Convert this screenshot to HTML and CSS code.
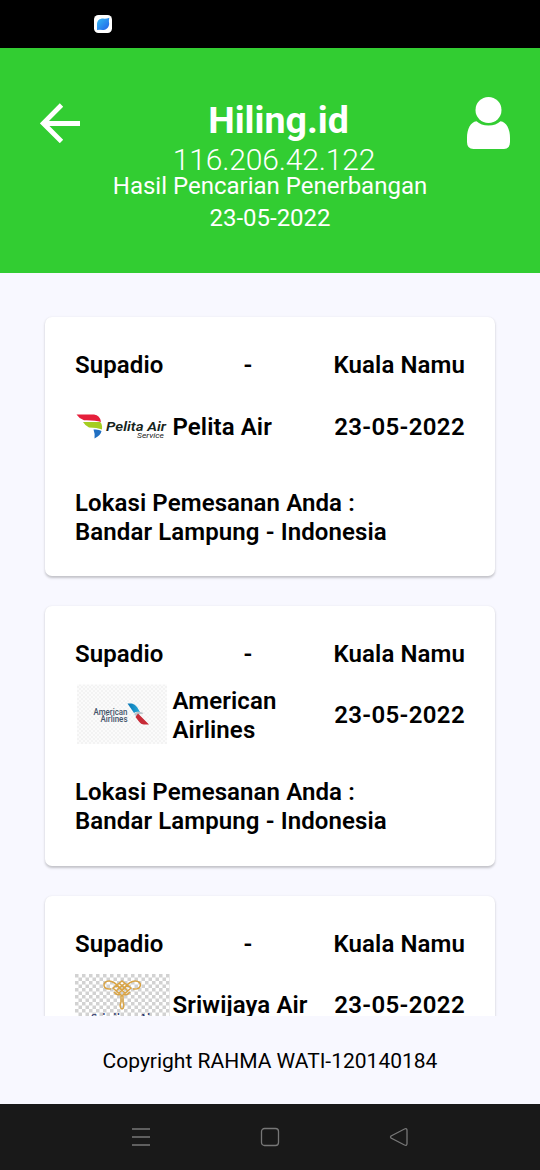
FILE: index.html
```html
<!DOCTYPE html>
<html lang="id">
<head>
<meta charset="utf-8">
<title>Hiling.id</title>
<link rel="stylesheet" href="styles.css">
</head>
<body>
<div class="status">
  <svg class="status-icon" width="18" height="18" viewBox="0 0 18 18">
    <defs><linearGradient id="leaf" x1="0" y1="0" x2="1" y2="1"><stop offset="0" stop-color="#35bdf5"/><stop offset="1" stop-color="#2460e8"/></linearGradient></defs>
    <rect width="18" height="18" rx="4.5" fill="#fff"/>
    <path d="M3 15V9.500C3 5.500 5.500 3.500 9 3.500Q12 4 15.300 2.700Q14.500 6 15.200 9C14.600 13 12 15 8.500 15Q6 14.300 3 15Z" fill="url(#leaf)"/>
  </svg>
</div>
<header class="header">
  <svg class="back" width="40" height="40" viewBox="0 0 40 40" fill="none" stroke="#fff" stroke-width="4.800"><path d="M40 20.500H3M21.500 2L3.300 20.300L21.500 38.500"/></svg>
  <div class="heading">
    <h1 class="title">Hiling.id</h1>
    <div class="ip">116.206.42.122</div>
    <div class="subtitle">Hasil Pencarian Penerbangan</div>
    <div class="date">23-05-2022</div>
  </div>
  <svg class="user" width="44" height="52" viewBox="0 0 44 52" fill="#fff"><circle cx="22.500" cy="13" r="13"/><path d="M10.500 24.200C13.500 27 17.500 28.600 22.500 28.600S31.500 27 34.500 24.200C40.500 25 44 32 44 41V45Q44 52 38 52H7.500Q1 52 1 45V41C1 32 4.500 25 10.500 24.200Z"/></svg>
</header>
<main class="list">
  <section class="card">
    <div class="route"><span class="from">Supadio</span><span>-</span><span class="to">Kuala Namu</span></div>
    <div class="flight">
      <svg class="logo" width="95" height="60" viewBox="0 0 95 60">
        <path d="M1.500 17.500H19Q25 18 26 25Q20 23 9 23.300Q4 21.500 1.500 17.500Z" fill="#e51f3b"/>
        <path d="M8 25H25Q27.500 26.500 27 32.500Q22 30.500 14 30.500Q10 28.500 8 25Z" fill="#a5cd20"/>
        <path d="M18.500 32.500Q24 32 26.500 34Q26 38 19.500 41.500Q20 36 18.500 32.500Z" fill="#216fc2"/>
        <text class="pelita" x="31" y="34" textLength="60" lengthAdjust="spacingAndGlyphs">Pelita Air</text>
        <text class="service" x="62" y="41" textLength="27" lengthAdjust="spacingAndGlyphs">Service</text>
      </svg>
      <span class="airline">Pelita Air</span><span class="when">23-05-2022</span>
    </div>
    <div class="place">Lokasi Pemesanan Anda :<br>Bandar Lampung - Indonesia</div>
  </section>
  <section class="card card-tall">
    <div class="route"><span class="from">Supadio</span><span>-</span><span class="to">Kuala Namu</span></div>
    <div class="flight">
      <svg class="logo" width="95" height="60" viewBox="0 0 95 60">
        <defs>
          <pattern id="pale" width="4" height="4" patternUnits="userSpaceOnUse"><rect width="4" height="4" fill="#fbfbfb"/><path d="M0 0h2v2H0zM2 2h2v2H2z" fill="#f3f3f3"/></pattern>
          <linearGradient id="blue" x1="0" x2="1"><stop offset="0" stop-color="#0877b6"/><stop offset="1" stop-color="#29a9d8"/></linearGradient>
        </defs>
        <rect x="2" y=".5" width="90" height="60" fill="url(#pale)"/>
        <text class="american" x="18.500" y="30.500" textLength="34" lengthAdjust="spacingAndGlyphs">American</text>
        <text class="american" x="25.500" y="37.500" textLength="27" lengthAdjust="spacingAndGlyphs">Airlines</text>
        <path d="M52.500 19.500H57Q60 20 62 23L65 28Q61 27 59 29Z" fill="url(#blue)"/>
        <path d="M59 30Q62 26.500 67.500 28.500Q69 29.500 67 30Q63 29.500 61.500 32.500Z" fill="#bcc5cb"/>
        <path d="M63 29.500L74 40.500H69Q66 40.500 63.500 37L60.500 33Z" fill="#c72b37"/>
      </svg>
      <span class="airline">American<br>Airlines</span><span class="when">23-05-2022</span>
    </div>
    <div class="place">Lokasi Pemesanan Anda :<br>Bandar Lampung - Indonesia</div>
  </section>
  <section class="card">
    <div class="route"><span class="from">Supadio</span><span>-</span><span class="to">Kuala Namu</span></div>
    <div class="flight">
      <svg class="logo" width="95" height="60" viewBox="0 0 95 60">
        <defs><pattern id="checks" width="7" height="7" patternUnits="userSpaceOnUse"><rect width="7" height="7" fill="#fff"/><path d="M0 0h3.500v3.500H0zM3.500 3.500h3.500v3.500H3.500z" fill="#d2d2d2"/></pattern></defs>
        <rect width="95" height="60" fill="url(#checks)"/>
        <g fill="none" stroke="#d9a445" stroke-width="1.500">
          <path d="M36 15C27 16 27 7 34 7C40 7 44 13 47 16C50 13 54 7 60 7C68 7 67 16 58 15"/>
          <path d="M38 14L47 7L56 14L47 22ZM41 11L50 19M44 9L53 17M53 11L44 19M50 9L41 17"/>
          <path d="M39 18Q42 22 46 20M55 18Q52 22 48 20M46 22V28Q44 34 47 35Q50 34 48 28V22"/>
        </g>
        <text class="sriwijaya" x="16" y="48" textLength="64" lengthAdjust="spacingAndGlyphs">Sriwijaya Air</text>
      </svg>
      <span class="airline">Sriwijaya Air</span><span class="when">23-05-2022</span>
    </div>
  </section>
</main>
<footer class="footer">Copyright RAHMA WATI-120140184</footer>
<nav class="nav">
  <svg width="20" height="20" viewBox="0 0 20 20"><path d="M1 2H19M1 10H19M1 18H19"/></svg>
  <svg width="20" height="20" viewBox="0 0 20 20"><rect x="1.500" y="1.500" width="17" height="17" rx="3"/></svg>
  <svg width="20" height="20" viewBox="0 0 20 20"><path d="M2 9L15.500 2Q18 1 18 3.500V16.500Q18 19 15.500 18L2 11Q1 10 2 9Z"/></svg>
</nav>
</body>
</html>
```
FILE: styles.css
```css
* { box-sizing: border-box; }
body { margin: 0; width: 540px; height: 1170px; display: flex; flex-direction: column; overflow: hidden; background: #f8f8ff; color: #000; font-family: Roboto, sans-serif; }
.status { height: 48px; flex: none; background: #000; padding: 15px 0 0 94px; }
.status-icon { display: block; }
.header { height: 225px; flex: none; background: #32cd32; color: #fff; display: grid; grid-template-columns: 40px 1fr 44px; padding: 49px 30px 0 40px; }
.back { margin-top: 6px; }
.heading { text-align: center; white-space: nowrap; padding-right: 6px; }
.title { margin: 0; padding-left: 17px; font-size: 37.5px; line-height: 46px; font-weight: 700; }
.ip { padding-left: 8px; font-size: 30px; line-height: 34px; font-weight: 300; letter-spacing: -.15px; }
.subtitle { font-size: 24px; line-height: 18px; }
.date { font-size: 24px; line-height: 47px; }
.list { height: 743px; flex: none; overflow: hidden; padding: 44px 45px 0; display: flex; flex-direction: column; gap: 30px; }
.card { height: 259px; flex: none; background: #fff; border-radius: 7px; padding: 34px 30px 0; box-shadow: 0 1.5px 2.5px rgba(0,0,0,.22); font-size: 24px; line-height: 28.8px; font-weight: 600; letter-spacing: .1px; }
.card-tall { height: 260px; }
.route { display: grid; grid-template-columns: 168.500px 1fr auto; height: 44px; }
.flight { display: grid; grid-template-columns: 95px 1fr auto; column-gap: 2.5px; height: 60px; align-items: center; white-space: nowrap; }
.logo { display: block; }
.airline, .when { padding-top: 3px; }
.when { letter-spacing: .35px; }
.place { margin-top: 34px; }
.card:first-child .logo { padding-top: 2px; height: 62px; }
.pelita { font: italic 600 12px Roboto, sans-serif; letter-spacing: 0; fill: #16241b; }
.service { font: italic 400 7px Roboto, sans-serif; letter-spacing: 0; fill: #222; }
.american { font: 500 8.5px Roboto, sans-serif; letter-spacing: 0; fill: #44556a; }
.sriwijaya { font: 700 12px "Liberation Serif", serif; letter-spacing: 0; fill: #27336f; }
.footer { height: 88px; flex: none; text-align: center; font-size: 21px; line-height: 90px; }
.nav { height: 66px; flex: none; background: #191919; display: flex; justify-content: center; align-items: center; gap: 109px; }
.nav svg { fill: none; stroke: #777; stroke-width: 1.3; }
```
